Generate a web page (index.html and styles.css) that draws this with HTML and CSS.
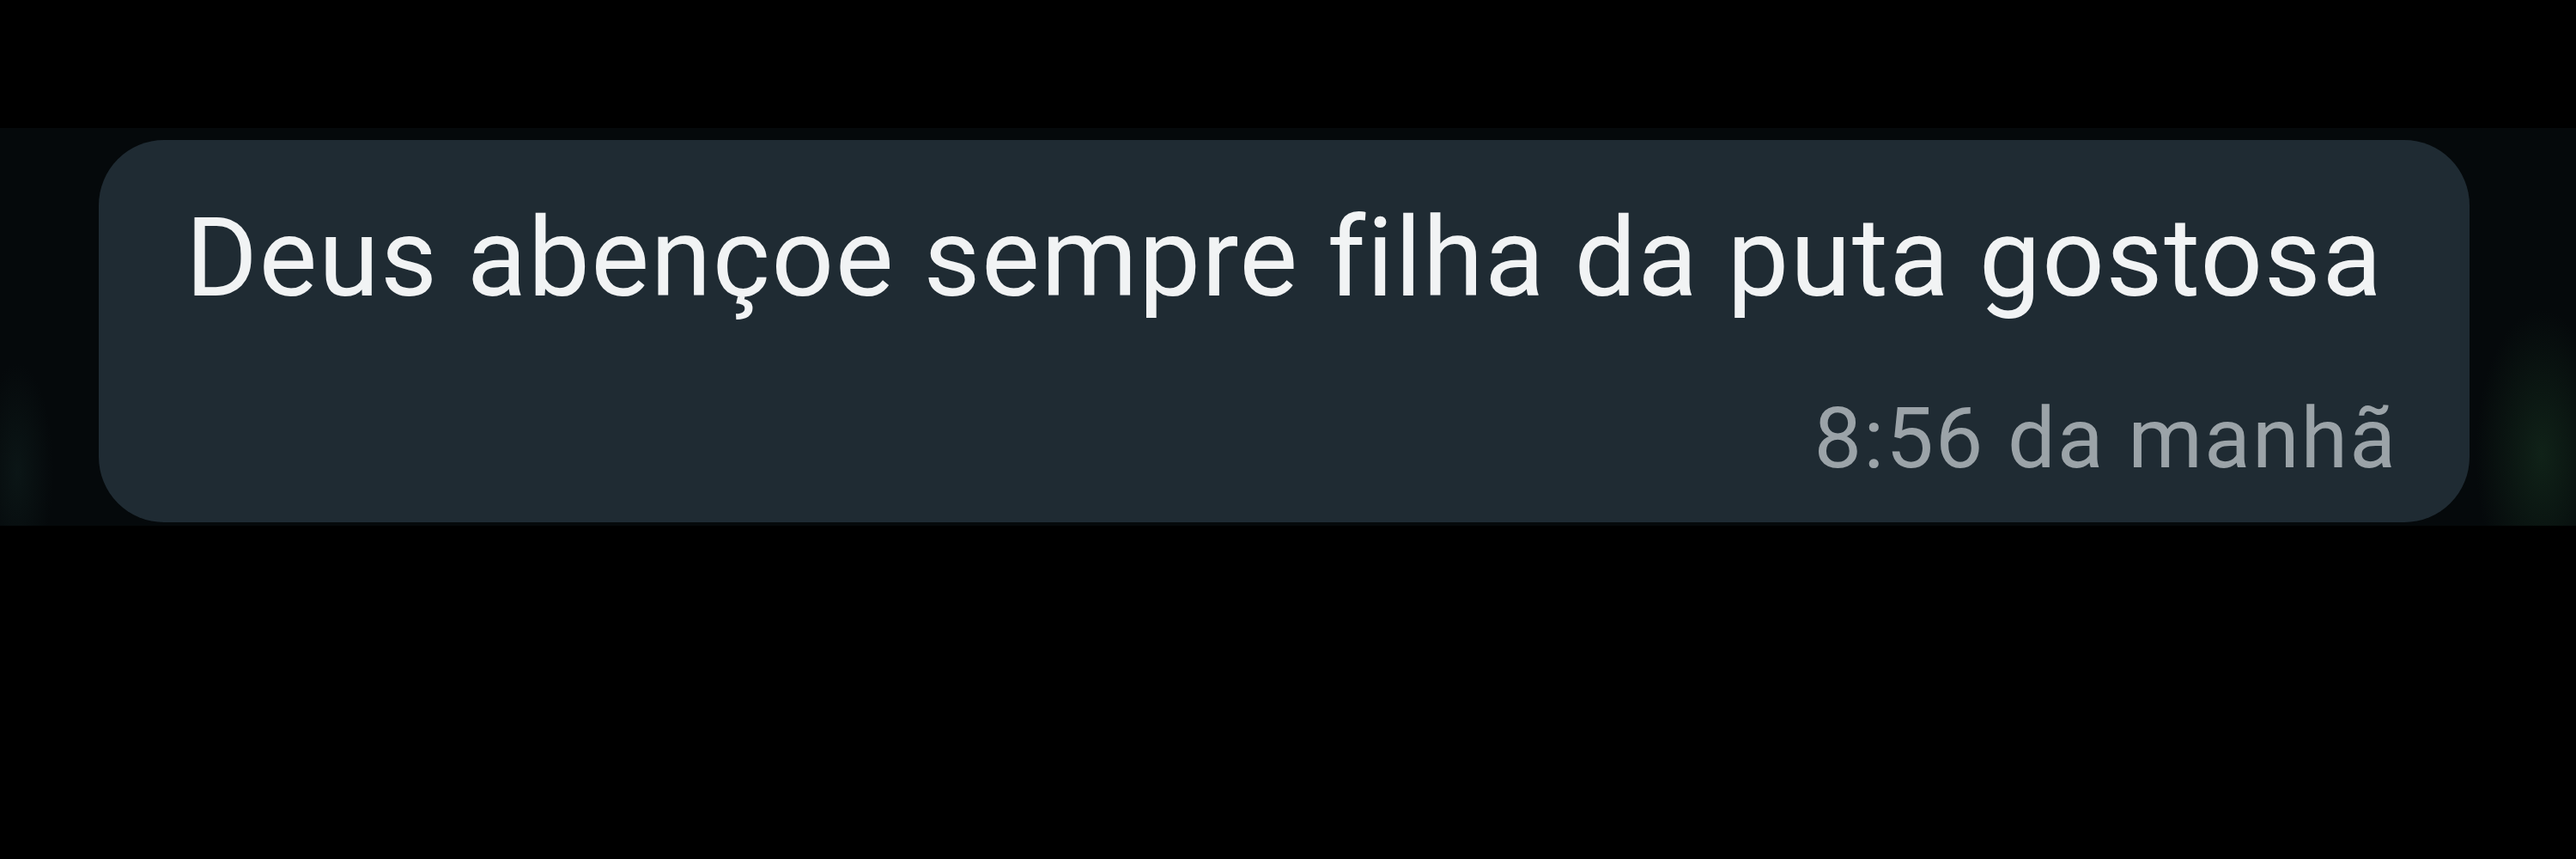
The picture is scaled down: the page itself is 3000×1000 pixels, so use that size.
FILE: index.html
```html
<!DOCTYPE html>
<html lang="pt">
<head>
<meta charset="utf-8">
<link rel="stylesheet" href="styles.css">
</head>
<body>
<div class="band">
  <div class="bubble">
    <p class="msg">Deus abençoe sempre filha da puta gostosa</p>
    <div class="meta">8:56 da manhã</div>
  </div>
</div>
</body>
</html>
```
FILE: styles.css
```css
html, body {
  margin: 0;
  padding: 0;
  background: #000;
  width: 3000px;
  height: 1000px;
  overflow: hidden;
}
.band {
  margin-top: 149px;
  height: 463px;
  background:
    radial-gradient(ellipse 110px 240px at 2960px 380px, rgba(25, 55, 35, 0.55), transparent 70%),
    radial-gradient(ellipse 60px 180px at 20px 400px, rgba(20, 40, 38, 0.4), transparent 70%),
    #05090b;
  display: flex;
  padding-top: 14px;
  padding-left: 115px;
  box-sizing: border-box;
}
.bubble {
  width: 2761px;
  height: 445px;
  background: #1f2b33;
  border-radius: 76px;
  box-sizing: border-box;
  padding: 0 84px 0 101px;
  display: flex;
  flex-direction: column;
  font-family: Roboto, "Noto Sans", sans-serif;
}
.msg {
  margin: 0;
  padding-top: 62px;
  font-size: 128px;
  line-height: 150px;
  letter-spacing: 1.5px;
  color: #f1f3f4;
  white-space: nowrap;
}
.meta {
  align-self: flex-end;
  margin-top: 80px;
  font-size: 99px;
  line-height: 110px;
  letter-spacing: 2px;
  color: #9ba3a8;
}
```
